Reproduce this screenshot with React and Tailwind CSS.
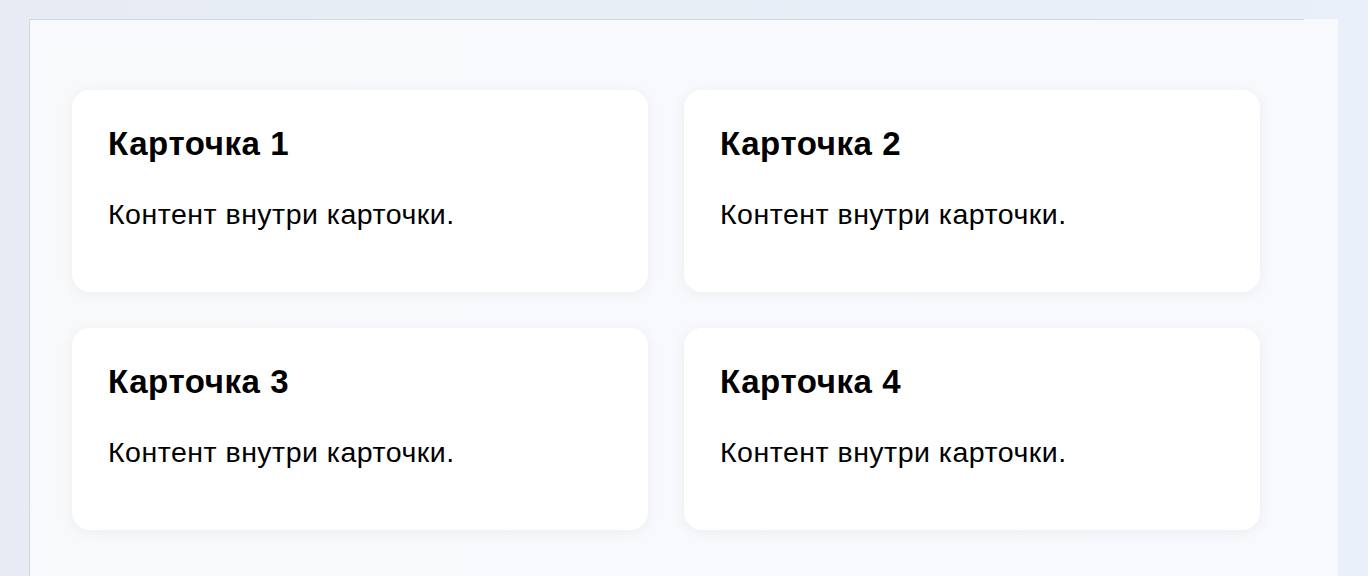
import React from 'react';

const cards = [1, 2, 3, 4];

const Card = ({ n }) => (
  <div className="bg-white rounded-[18px] h-[202px] px-9 pt-[36px] shadow-[0_2px_14px_rgba(15,23,42,0.05)]">
    <h2 className="text-[33px] leading-[36px] font-bold tracking-[0.6px] text-black">Карточка {n}</h2>
    <p className="mt-[34px] text-[28.5px] leading-[36px] tracking-[0.5px] text-black">Контент внутри карточки.</p>
  </div>
);

export default function App() {
  return (
    <div className="h-[576px] overflow-hidden bg-gradient-to-r from-[#e7ecf4] to-[#e9f0f9] pt-[19px] pl-[29px] pr-[30px]" style={{ fontFamily: '"Liberation Sans", Arial, sans-serif' }}>
      <div className="h-full bg-gradient-to-r from-[#f8f9fb] to-[#f7f9fd] border-l border-[#d3d7de] flex flex-col">
        <div className="h-px w-[1274px] bg-[#d3d7de]" />
        <div className="pl-[42px] pt-[70px]">
          <div className="grid grid-cols-[576px_576px] gap-9">
            {cards.map(n => <Card key={n} n={n} />)}
          </div>
        </div>
      </div>
    </div>
  );
}
